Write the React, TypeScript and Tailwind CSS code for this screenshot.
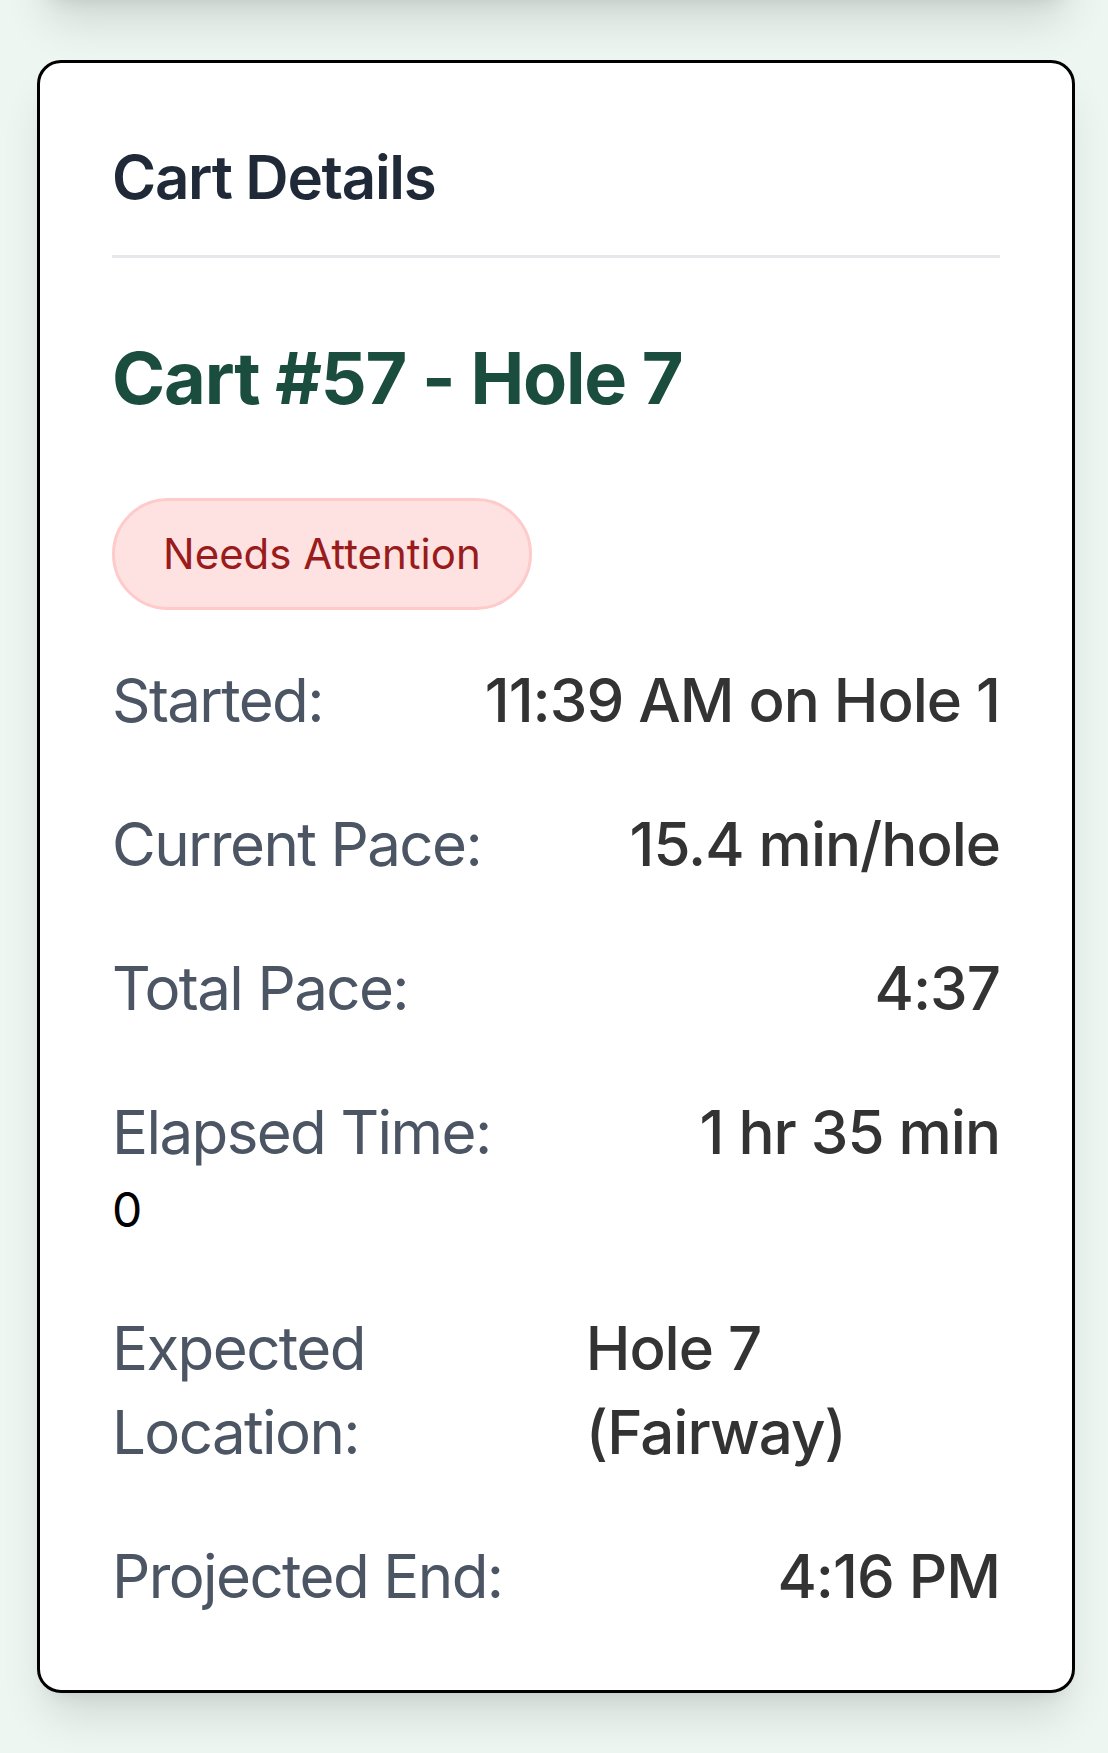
import React from "react";

const rows: { label: string; value: string }[] = [
  { label: "Started:", value: "11:39 AM on Hole 1" },
  { label: "Current Pace:", value: "15.4 min/hole" },
  { label: "Total Pace:", value: "4:37" },
  { label: "Elapsed Time:", value: "1 hr 35 min" },
];

function Row({ label, value, first }: { label: string; value: string; first?: boolean }) {
  return (
    <div className={first ? "flex justify-between text-[60px] leading-[84px]" : "mt-[60px] flex justify-between text-[60px] leading-[84px]"}>
      <span className="tracking-[-1.6px] text-[#4b5563]">{label}</span>
      <span className="font-[550] tracking-[-1px] text-[#333333]">{value}</span>
    </div>
  );
}

export default function App() {
  return (
    <div
      className="flex min-h-screen flex-col bg-[#edf6f1] pl-[37px] pr-[33px] pb-[59px]"
      style={{ fontFamily: 'Inter, "Noto Sans", sans-serif' }}
    >
      <div className="-mt-[100px] h-[100px] rounded-[24px] bg-white shadow-[0_30px_45px_-9px_rgba(0,0,0,0.12),0_12px_18px_-12px_rgba(0,0,0,0.1)]" />
      <div className="mt-[60px] rounded-[24px] border-[3px] border-black bg-white p-[72px] shadow-[0_30px_45px_-9px_rgba(0,0,0,0.12),0_12px_18px_-12px_rgba(0,0,0,0.1)]">
        <h2 className="mb-[72px] border-b-[3px] border-[#e5e7eb] pb-[36px] text-[60px] font-semibold leading-[84px] tracking-[-1.3px] text-[#1f2937]">
          Cart Details
        </h2>
        <h3 className="mb-[72px] text-[72px] font-bold leading-[96px] tracking-[-1.2px] text-[#1b4d3e]">
          Cart #57 - Hole 7
        </h3>
        <div className="mb-[48px] flex">
          <span className="rounded-full border-[3px] border-[#fecaca] bg-[#fee2e2] px-[48px] py-[23px] text-[42px] leading-[60px] text-[#991b1b]">
            Needs Attention
          </span>
        </div>
        {rows.map((r, i) => (
          <Row key={r.label} label={r.label} value={r.value} first={i === 0} />
        ))}
        <div className="text-[48px] leading-[72px] text-black">0</div>
        <Row label="Expected Location:" value="Hole 7 (Fairway)" />
        <Row label="Projected End:" value="4:16 PM" />
      </div>
    </div>
  );
}
